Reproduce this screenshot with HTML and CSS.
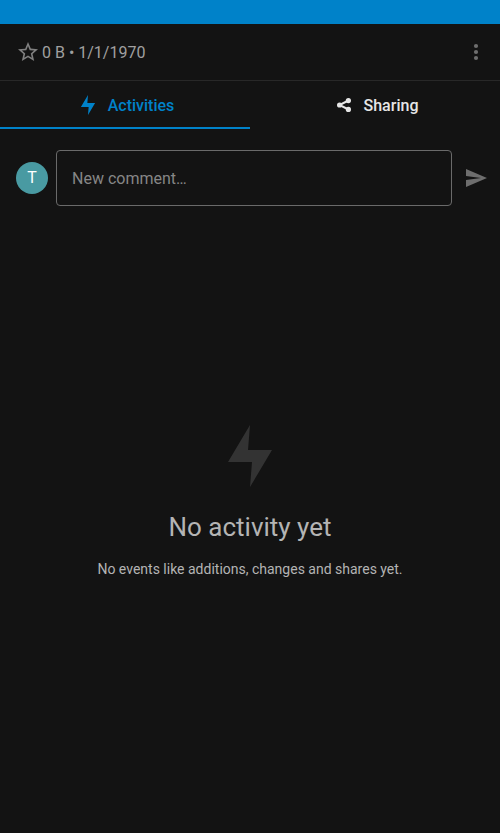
FILE: index.html
```html
<!DOCTYPE html>
<html lang="en">
<head>
<meta charset="utf-8">
<meta name="viewport" content="width=device-width, initial-scale=1">
<title>File details</title>
<link rel="stylesheet" href="styles.css">
</head>
<body>
<div class="status-bar"></div>
<header class="file-header">
  <button class="icon-button favorite" type="button" aria-label="Favorite">
    <svg width="24" height="24" viewBox="0 0 24 24"><path d="M22 9.24l-7.19-.62L12 2 9.19 8.63 2 9.24l5.46 4.73L5.82 21 12 17.27 18.18 21l-1.63-7.03L22 9.24zM12 15.4l-3.76 2.27 1-4.28-3.32-2.88 4.38-.38L12 6.1l1.71 4.04 4.38.38-3.32 2.88 1 4.28L12 15.4z"/></svg>
  </button>
  <span class="file-meta">0 B • 1/1/1970</span>
  <button class="icon-button" type="button" aria-label="More">
    <svg width="24" height="24" viewBox="0 0 24 24"><circle cx="12" cy="6" r="2.1"/><circle cx="12" cy="12" r="2.1"/><circle cx="12" cy="18" r="2.1"/></svg>
  </button>
</header>
<nav class="tabs">
  <button class="tab tab-active" type="button">
    <svg width="16" height="20" viewBox="-2 0 48 62"><path d="M22 0 0 37H24L22 62 44 25H20Z"/></svg>
    Activities
  </button>
  <button class="tab" type="button">
    <svg width="16" height="16" viewBox="0 0 16 16"><path d="M12.5 3.5 3.5 8l9 4.5" fill="none" stroke="currentColor" stroke-width="2"/><circle cx="12.4" cy="3.6" r="2.6"/><circle cx="3.6" cy="8" r="2.6"/><circle cx="12.4" cy="12.4" r="2.6"/></svg>
    Sharing
  </button>
</nav>
<main class="content">
  <form class="comment-form">
    <span class="avatar">T</span>
    <input class="comment-input" type="text" placeholder="New comment…" aria-label="New comment">
    <button class="icon-button" type="button" aria-label="Send">
      <svg width="24" height="24" viewBox="0 0 24 24"><path d="M2.01 21 23 12 2.01 3 2 10l15 2-15 2z"/></svg>
    </button>
  </form>
  <section class="empty">
    <svg width="44" height="62" viewBox="0 0 44 62"><path d="M22 0 0 37H24L22 62 44 25H20Z"/></svg>
    <h1 class="empty-title">No activity yet</h1>
    <p class="empty-text">No events like additions, changes and shares yet.</p>
  </section>
</main>
</body>
</html>
```
FILE: styles.css
```css
* {
  box-sizing: border-box;
}

body {
  margin: 0;
  min-height: 100vh;
  display: flex;
  flex-direction: column;
  background: #131313;
  color: #b4b4b4;
  font-family: Roboto, sans-serif;
  font-size: 16px;
}

button {
  padding: 0;
  border: 0;
  background: none;
  font: inherit;
}

svg {
  display: block;
  fill: currentColor;
}

.status-bar {
  height: 24px;
  background: #0082c9;
}

.file-header {
  display: flex;
  align-items: center;
  height: 57px;
  padding: 0 12px 0 16px;
  border-bottom: 1px solid #282828;
}

.icon-button {
  color: #6e6e6e;
}

.favorite {
  color: #808080;
}

.file-meta {
  flex: 1;
  margin-left: 2px;
  color: #a0a0a0;
}

.tabs {
  display: flex;
}

.tab {
  flex: 1;
  display: flex;
  align-items: center;
  justify-content: center;
  gap: 12px;
  height: 48px;
  padding: 2px 0 0 4px;
  border-bottom: 2px solid transparent;
  color: #e6e6e6;
  font-weight: 500;
}

.tab-active {
  border-color: #0082c9;
  color: #0082c9;
}

.content {
  flex: 1;
  display: flex;
  flex-direction: column;
}

.comment-form {
  display: flex;
  align-items: center;
  gap: 8px;
  margin-top: 21px;
  padding: 0 12px 0 16px;
}

.avatar {
  width: 32px;
  height: 32px;
  border-radius: 50%;
  background: #499aa2;
  color: #fff;
  line-height: 32px;
  text-align: center;
}

.comment-input {
  flex: 1;
  min-width: 0;
  height: 56px;
  margin-right: 4px;
  padding: 0 15px;
  border: 1px solid #6a6a6a;
  border-radius: 4px;
  background: transparent;
  color: #e6e6e6;
  font: inherit;
}

.comment-input::placeholder {
  color: #868686;
  opacity: 1;
}

.empty {
  flex: 1;
  display: flex;
  flex-direction: column;
  align-items: center;
  justify-content: center;
  padding: 0 16px 36px;
  text-align: center;
}

.empty svg {
  color: #333;
}

.empty-title {
  margin: 24px 0 16px;
  font-size: 26px;
  font-weight: 400;
  line-height: 32px;
}

.empty-text {
  margin: 0;
  font-size: 14px;
  line-height: 20px;
}
```
